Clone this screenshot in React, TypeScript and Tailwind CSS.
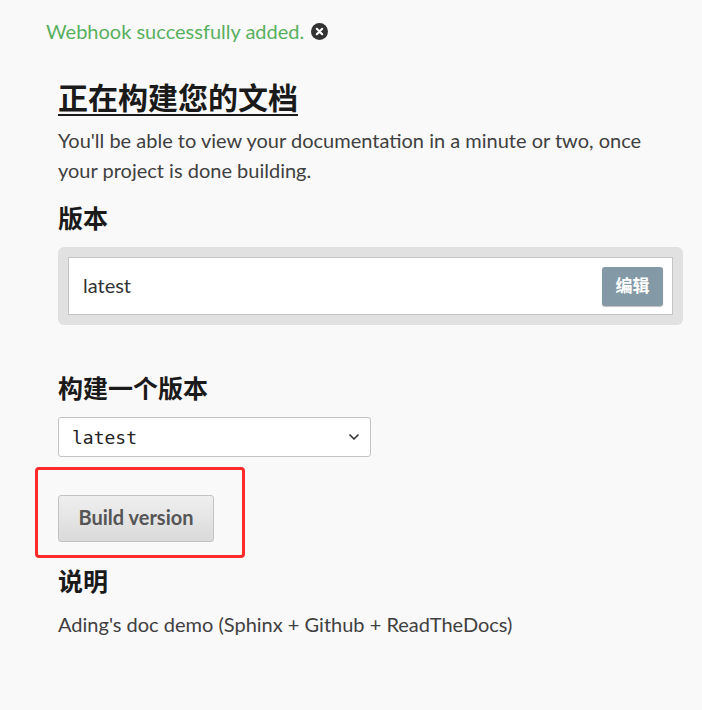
import { ChevronDown } from 'lucide-react';

export default function App() {
  return (
    <div
      className="relative min-h-[710px] w-[702px] bg-[#f9f9f9] text-[#404040]"
      style={{ fontFamily: 'Lato, "Noto Sans CJK SC", sans-serif' }}
    >
      {/* Flash message */}
      <div className="flex items-center gap-[7px] pl-[46px] pt-[18px] text-[20px] leading-[26px] text-[#58b05e]">
        <span>Webhook successfully added.</span>
        <span className="flex h-[17px] w-[17px] items-center justify-center rounded-full bg-[#333]">
          <svg viewBox="0 0 10 10" className="h-[9px] w-[9px]">
            <path d="M2 2 L8 8 M8 2 L2 8" stroke="#fff" strokeWidth="2.4" strokeLinecap="round" />
          </svg>
        </span>
      </div>

      <div className="pl-[58px] pr-[19px]">
        <h1 className="mt-[33px] text-[30px] font-bold leading-[40px] text-[#1a1a1a] underline decoration-2 underline-offset-[5px]">
          正在构建您的文档
        </h1>
        <p className="mt-[8px] text-[20px] leading-[30px]">
          You'll be able to view your documentation in a minute or two, once your project is done building.
        </p>

        <h2 className="mt-[16px] text-[25px] font-bold leading-[34px] text-[#1a1a1a]">版本</h2>
        <div className="mt-[12px] rounded-[6px] bg-[#e1e1e1] p-[10px]">
          <div className="flex h-[58px] items-center justify-between border border-[#c4c4c4] bg-white pl-[14px] pr-[9px]">
            <span className="pb-[3px] text-[20px] text-[#333]">latest</span>
            <button className="h-[39px] w-[61px] rounded-[3px] bg-[#8399a6] text-[17px] font-bold text-white shadow-[0_1px_1px_rgba(0,0,0,0.25)]">
              编辑
            </button>
          </div>
        </div>

        <h2 className="mt-[46px] text-[25px] font-bold leading-[34px] text-[#1a1a1a]">构建一个版本</h2>
        <div className="mt-[12px] flex h-[40px] w-[313px] items-center justify-between rounded-[3px] border border-[#c4c4c4] bg-white pl-[13px] pr-[8px]">
          <span className="text-[18px] text-[#222]" style={{ fontFamily: '"DejaVu Sans Mono", monospace' }}>
            latest
          </span>
          <ChevronDown className="h-[16px] w-[16px] text-[#333]" strokeWidth={2.5} />
        </div>

        <button className="mt-[38px] h-[47px] w-[156px] rounded-[3px] border border-[#c2c2c2] bg-gradient-to-b from-[#efefef] to-[#dadada] pb-[3px] text-[20px] font-bold text-[#555]">
          Build version
        </button>

        <h2 className="mt-[22px] text-[25px] font-bold leading-[34px] text-[#1a1a1a]">说明</h2>
        <p className="mt-[11px] text-[20px] leading-[30px]">
          Ading's doc demo (Sphinx + Github + ReadTheDocs)
        </p>
      </div>

      {/* annotation */}
      <div className="absolute left-[35px] top-[467px] h-[91px] w-[210px] rounded-[4px] border-[3px] border-[#ff2a2a]" />
    </div>
  );
}
